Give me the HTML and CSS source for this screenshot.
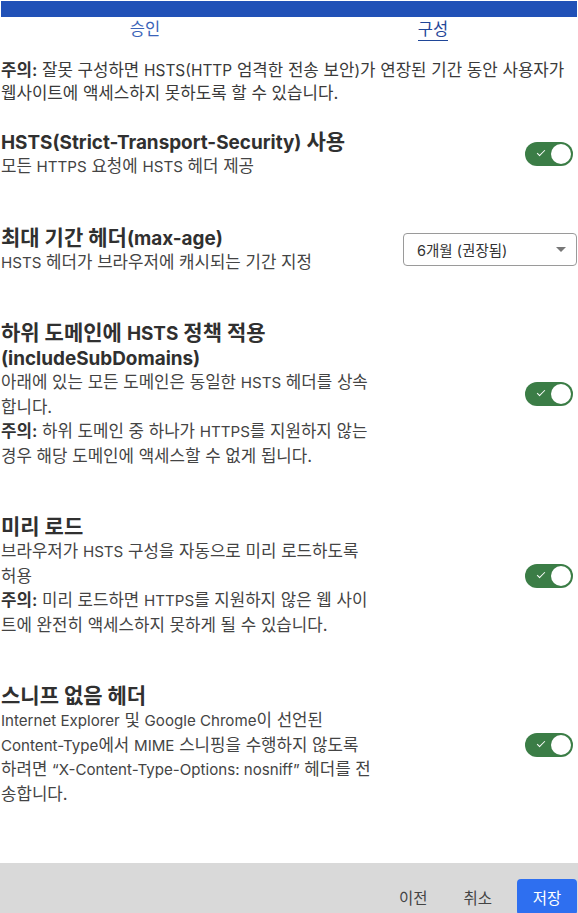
FILE: index.html
```html
<!DOCTYPE html>
<html lang="ko">
<head>
    <meta charset="UTF-8">
    <meta name="viewport" content="width=device-width, initial-scale=1.0">
    <title>HSTS 구성</title>
    <link rel="stylesheet" href="styles.css">
</head>
<body>
<div class="page">
    <div class="topbar"></div>
    <div class="tabs">
        <div class="tab">승인</div>
        <div class="tab active"><span>구성</span></div>
    </div>

    <p class="warning"><b>주의:</b> 잘못 구성하면 <span class="en">HSTS(HTTP</span> 엄격한 전송 보안<span class="en">)</span>가 연장된 기간 동안 사용자가 웹사이트에 액세스하지 못하도록 할 수 있습니다.</p>

    <div class="setting">
        <div class="info">
            <h3><span class="en">HSTS(Strict-Transport-Security)</span> 사용</h3>
            <p>모든 <span class="en">HTTPS</span> 요청에 <span class="en">HSTS</span> 헤더 제공</p>
        </div>
        <div class="toggle on"><span class="check"></span><span class="knob"></span></div>
    </div>

    <div class="setting">
        <div class="info">
            <h3>최대 기간 헤더<span class="en">(max-age)</span></h3>
            <p><span class="en">HSTS</span> 헤더가 브라우저에 캐시되는 기간 지정</p>
        </div>
        <div class="select">
            <span>6개월 (권장됨)</span>
            <span class="arrow"></span>
        </div>
    </div>

    <div class="setting">
        <div class="info">
            <h3>하위 도메인에 <span class="en">HSTS</span> 정책 적용 <span class="en">(includeSubDomains)</span></h3>
            <p>아래에 있는 모든 도메인은 동일한 <span class="en">HSTS</span> 헤더를 상속합니다.</p>
            <p><b>주의:</b> 하위 도메인 중 하나가 <span class="en">HTTPS</span>를 지원하지 않는 경우 해당 도메인에 액세스할 수 없게 됩니다.</p>
        </div>
        <div class="toggle on"><span class="check"></span><span class="knob"></span></div>
    </div>

    <div class="setting">
        <div class="info">
            <h3>미리 로드</h3>
            <p>브라우저가 <span class="en">HSTS</span> 구성을 자동으로 미리 로드하도록 허용</p>
            <p><b>주의:</b> 미리 로드하면 <span class="en">HTTPS</span>를 지원하지 않은 웹 사이트에 완전히 액세스하지 못하게 될 수 있습니다.</p>
        </div>
        <div class="toggle on"><span class="check"></span><span class="knob"></span></div>
    </div>

    <div class="setting">
        <div class="info">
            <h3>스니프 없음 헤더</h3>
            <p><span class="en">Internet Explorer</span> 및 <span class="en">Google Chrome</span>이 선언된 <span class="en">Content-Type</span>에서 <span class="en">MIME</span> 스니핑을 수행하지 않도록 하려면 <span class="en">“X-Content-Type-Options: nosniff”</span> 헤더를 전송합니다.</p>
        </div>
        <div class="toggle on"><span class="check"></span><span class="knob"></span></div>
    </div>
</div>

<div class="footer">
    <button class="btn">이전</button>
    <button class="btn">취소</button>
    <button class="btn primary">저장</button>
</div>
</body>
</html>
```

FILE: styles.css
```css
html, body {
    margin: 0;
    height: 100%;
    overflow: hidden;
}
body {
    font-family: Inter, "Noto Sans CJK KR", sans-serif;
    color: #3a3a3a;
    background: #fff;
    display: flex;
    flex-direction: column;
}
.page {
    flex: 1;
    padding: 0 1px;
}
.topbar {
    height: 16px;
    margin-top: 1px;
    background-color: #2151b7;
}
.tabs {
    display: flex;
    height: 27px;
}
.tab {
    flex: 1;
    text-align: center;
    font-size: 16.5px;
    line-height: 23px;
    padding-top: 1px;
    color: #3a63b8;
}
.tab.active span {
    color: #1f4698;
    border-bottom: 1px solid #1f4698;
    padding-bottom: 1px;
}
.en {
    font-size: 0.92em;
    line-height: 1;
}
.warning {
    margin: 15px 0 0;
    font-size: 16.8px;
    line-height: 23px;
    color: #3a3a3a;
}
.warning b, .info b {
    font-weight: 600;
    color: #333;
}
.setting {
    display: flex;
    justify-content: space-between;
    align-items: center;
    padding: 24px 0 22px;
}
.info {
    width: 376px;
}
.info h3 {
    margin: 0;
    font-size: 21px;
    line-height: 25px;
    font-weight: 700;
    color: #303030;
}
.info h3 .en {
    font-size: 0.9em;
}
.info p {
    margin: 0;
    font-size: 16.8px;
    line-height: 24.5px;
    color: #444;
}
.info p .en {
    font-size: 0.9em;
}
.toggle {
    position: relative;
    width: 48px;
    height: 24px;
    border-radius: 12px;
    background-color: #3b7d46;
    margin-right: 4px;
}
.toggle .knob {
    position: absolute;
    right: 2px;
    top: 2px;
    width: 20px;
    height: 20px;
    border-radius: 50%;
    background: #fff;
}
.toggle .check {
    position: absolute;
    left: 12px;
    top: 8px;
    width: 7px;
    height: 3px;
    border-left: 1.5px solid #fff;
    border-bottom: 1.5px solid #fff;
    transform: rotate(-45deg);
}
.select {
    display: flex;
    align-items: center;
    justify-content: space-between;
    box-sizing: border-box;
    width: 174px;
    height: 33px;
    padding: 0 10px 0 13px;
    border: 1px solid #9a9a9a;
    border-radius: 4px;
    font-size: 14.5px;
    color: #333;
}
.select .arrow {
    width: 0;
    height: 0;
    border-left: 5px solid transparent;
    border-right: 5px solid transparent;
    border-top: 5px solid #777;
}
.footer {
    height: 50px;
    background-color: #d9d9d9;
    display: flex;
    justify-content: flex-end;
    align-items: flex-start;
    padding: 16px 1px 0 0;
    box-sizing: border-box;
    flex-shrink: 0;
}
.btn {
    font-family: Inter, "Noto Sans CJK KR", sans-serif;
    font-size: 15.5px;
    border: none;
    background: transparent;
    color: #444;
    height: 36px;
    padding: 0 18px;
    border-radius: 4px;
    cursor: pointer;
}
.btn.primary {
    background-color: #2e6ff0;
    color: #fff;
    width: 60px;
    padding: 0;
    margin-left: 7px;
}
```
